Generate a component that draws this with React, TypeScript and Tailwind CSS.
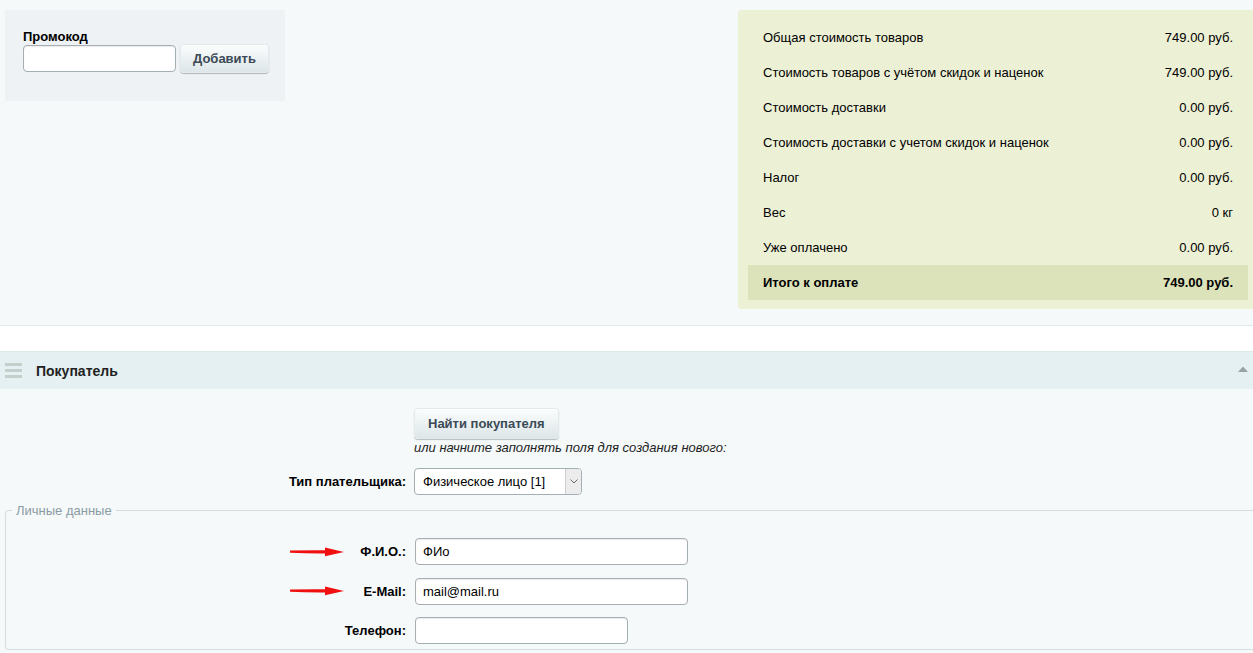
import React from 'react';

const totals = [
  { label: 'Общая стоимость товаров', value: '749.00 руб.' },
  { label: 'Стоимость товаров с учётом скидок и наценок', value: '749.00 руб.' },
  { label: 'Стоимость доставки', value: '0.00 руб.' },
  { label: 'Стоимость доставки с учетом скидок и наценок', value: '0.00 руб.' },
  { label: 'Налог', value: '0.00 руб.' },
  { label: 'Вес', value: '0 кг' },
  { label: 'Уже оплачено', value: '0.00 руб.' },
];

const btn =
  'rounded-[4px] bg-gradient-to-b from-[#fbfdfd] to-[#dde6e9] font-bold text-[#3b4a56] shadow-[0_1px_1px_rgba(0,0,0,0.25),inset_0_1px_0_#fff] border border-[#e3eaec]';

const inputCls =
  'h-[27px] rounded-[4px] border border-[#a5aeb3] bg-white px-[7px] text-[13px] text-black shadow-[inset_0_1px_1px_rgba(0,0,0,0.08)] outline-none';

function Arrow() {
  return (
    <svg width="54" height="10" viewBox="0 0 54 10" className="shrink-0">
      <path d="M0 3.4 Q18 3.2 38 3.3 L38 6.4 Q18 6.6 0 5.8 Z" fill="#f01010" />
      <path d="M35 0.6 L54 5 L35 9.2 Z" fill="#f01010" />
    </svg>
  );
}

function Field({ label, value, width, arrow }: { label: string; value: string; width: string; arrow?: boolean }) {
  return (
    <div className="flex h-[39.5px] items-center">
      <div className="flex w-[400px] items-center">
        <div className="ml-[284px] w-[54px]">{arrow && <Arrow />}</div>
        <div className="flex-1 text-right font-bold">{label}</div>
      </div>
      <input readOnly defaultValue={value} className={`${inputCls} ml-[9px] ${width}`} />
    </div>
  );
}

export default function App() {
  return (
    <div className="h-[653px] w-full overflow-hidden bg-[#f5f9fa] text-[13px] leading-[15px] text-black [font-family:'Liberation_Sans',Arial,sans-serif]">
      {/* top: promo + totals */}
      <div className="flex h-[326px] items-start justify-between border-b border-[#dfe8eb] pl-[5px] pt-[10px]">
        <div className="h-[91px] w-[280px] bg-[#eef2f4] pl-[18px] pt-[19px]">
          <div className="font-bold">Промокод</div>
          <div className="flex items-center gap-[4px]">
            <input className={`${inputCls} h-[26px] w-[153px] border-[#a0a9ae]`} />
            <button className={`${btn} h-[29px] px-[12px] text-[13px]`}>Добавить</button>
          </div>
        </div>
        <div className="mr-[-5px] h-[299px] w-[520px] shrink-0 rounded-l-[3px] bg-[#ecf0d5] px-[10px] pt-[10px]">
          {totals.map((t) => (
            <div key={t.label} className="flex h-[35px] items-center justify-between px-[15px]">
              <span>{t.label}</span>
              <span>{t.value}</span>
            </div>
          ))}
          <div className="flex h-[35px] items-center justify-between bg-[#dce3bb] px-[15px] font-bold">
            <span>Итого к оплате</span>
            <span>749.00 руб.</span>
          </div>
        </div>
      </div>

      <div className="h-[25px] bg-white" />

      {/* section header */}
      <div className="flex h-[38px] items-center border-t border-[#dde9eb] bg-[#e4f0f1] pr-[3px]">
        <div className="ml-[5px] flex w-[17px] flex-col gap-[3px]">
          <span className="h-[3px] bg-[#c3cfcb]" />
          <span className="h-[3px] bg-[#c3cfcb]" />
          <span className="h-[3px] bg-[#c3cfcb]" />
        </div>
        <div className="ml-[14px] mt-[2px] text-[14px] font-bold text-[#222]">Покупатель</div>
        <svg width="10" height="6" viewBox="0 0 10 6" className="ml-auto mr-[2px] mt-[-4px]">
          <path d="M0 6 L5 0.5 L10 6 Z" fill="#9aa3a6" />
        </svg>
      </div>

      {/* buyer form */}
      <div className="pt-[19px]">
        <div className="ml-[414px]">
          <button className={`${btn} h-[31px] px-[13px]`}>Найти покупателя</button>
          <div className="mt-[1px] italic text-[#222]">или начните заполнять поля для создания нового:</div>
        </div>
        <div className="mt-[13px] flex items-center">
          <div className="w-[406px] text-right font-bold">Тип плательщика:</div>
          <div className="ml-[8px] flex h-[27px] w-[168px] items-stretch overflow-hidden rounded-[4px] border border-[#a5aeb3] bg-white">
            <div className="flex flex-1 items-center pl-[8px]">Физическое лицо [1]</div>
            <div className="flex w-[16px] items-center justify-center border-l border-[#c9cfd2] bg-[#ececec]">
              <svg width="8" height="5" viewBox="0 0 8 5">
                <path d="M0.5 0.5 L4 4 L7.5 0.5" fill="none" stroke="#666" strokeWidth="1" />
              </svg>
            </div>
          </div>
        </div>

        <fieldset className="mt-[8px] ml-[5px] h-[147px] rounded-l-[4px] border border-r-0 border-[#d5dde0] pt-[14px]">
          <legend className="ml-[6px] px-[4px] text-[#8b9ba3]">Личные данные</legend>
          <Field label="Ф.И.О.:" value="ФИо" width="w-[273px]" arrow />
          <Field label="E-Mail:" value="mail@mail.ru" width="w-[273px]" arrow />
          <Field label="Телефон:" value="" width="w-[213px]" />
        </fieldset>
      </div>
    </div>
  );
}
